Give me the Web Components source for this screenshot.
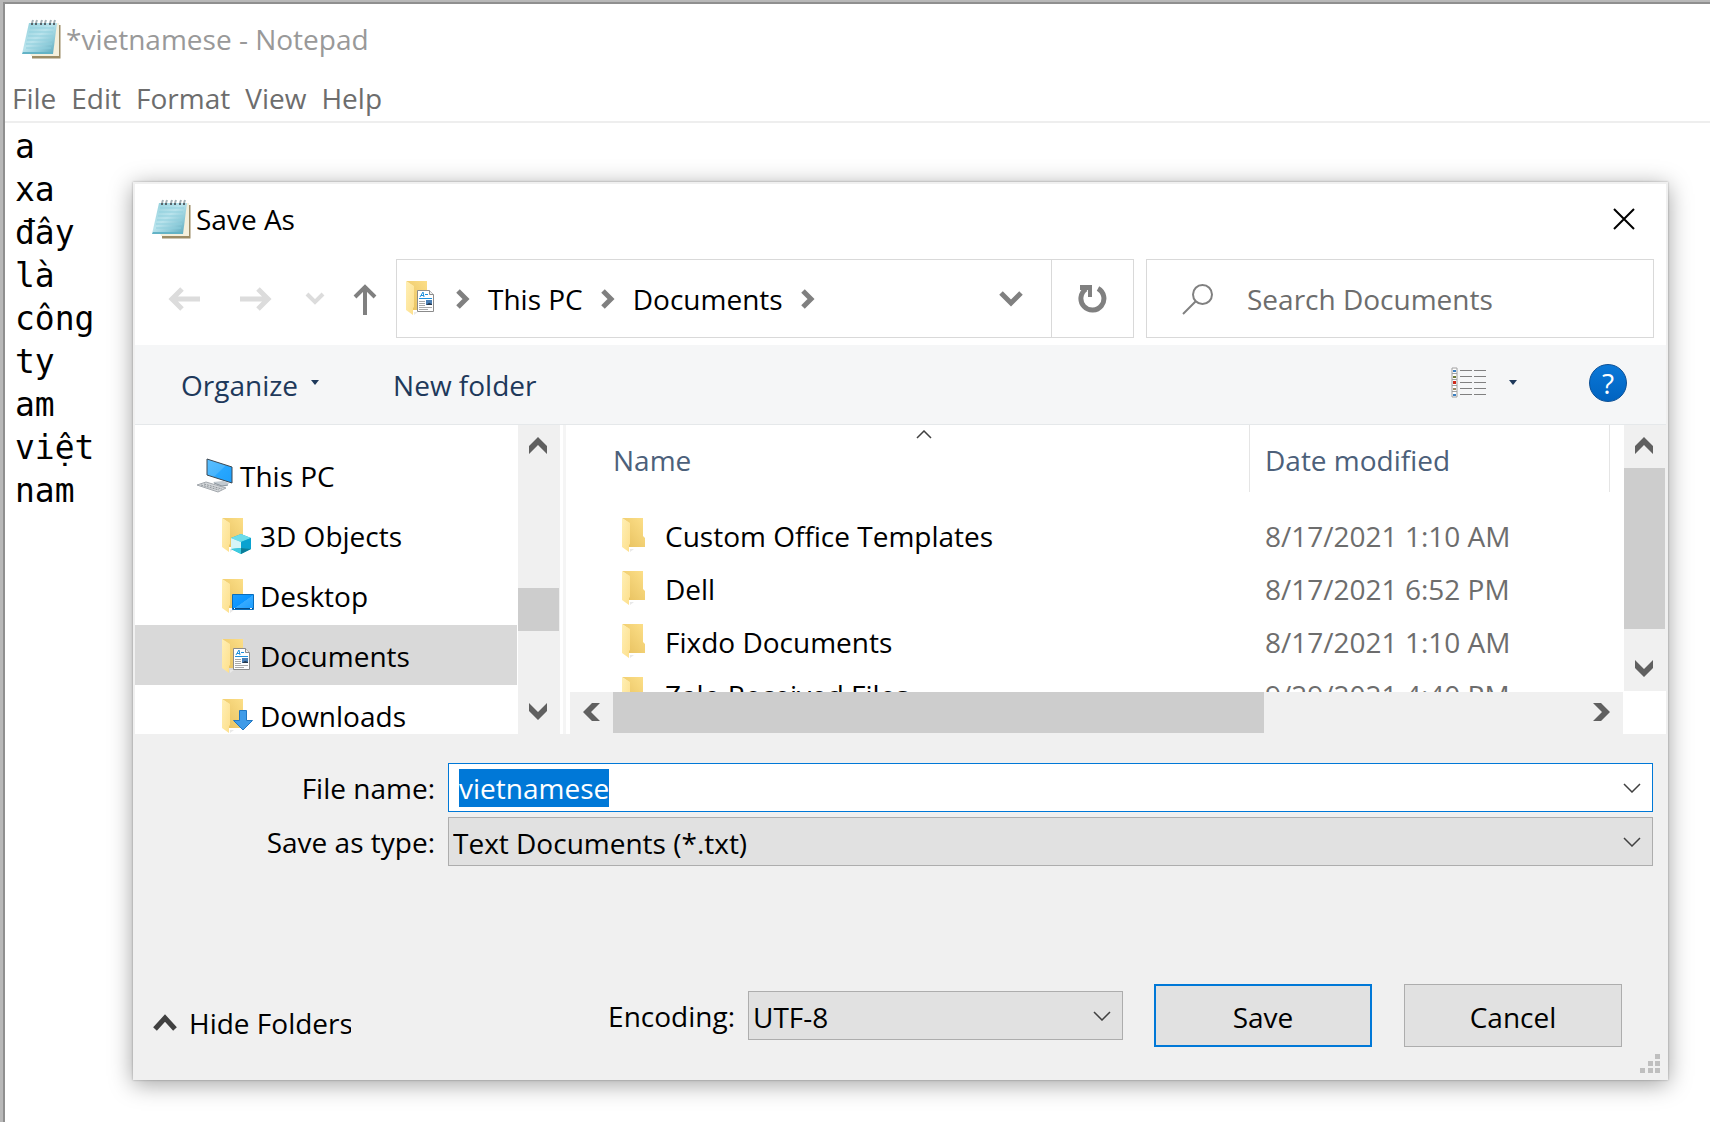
<!DOCTYPE html>
<html lang="en">
<head>
<meta charset="utf-8">
<title>*vietnamese - Notepad</title>
<style>
  html, body { margin: 0; height: 100%; overflow: hidden; }
  body {
    --ui: "Open Sans", "Noto Sans", sans-serif;
    --mono: "DejaVu Sans Mono", monospace;
    --accent: #0078d7;
    font: 28px/36px var(--ui);
    color: #000;
    background: #fff;
  }
</style>
</head>
<body>
<notepad-window>
  <save-dialog></save-dialog>
</notepad-window>

<script>
const FOLDER = `
  <defs>
    <linearGradient id="fb" x1="0" y1="1" x2="1" y2="0"><stop offset="0" stop-color="#e6bf5c"/><stop offset="1" stop-color="#fde08a"/></linearGradient>
    <linearGradient id="ff" x1="0" y1="0" x2="1" y2="1"><stop offset="0" stop-color="#ffefb4"/><stop offset="1" stop-color="#fddf8c"/></linearGradient>
  </defs>
  <path d="M8 34l4-3h-4z" fill="#e9e9e9"/>
  <path d="M0 0h21v18l2 2v9H7V5z" fill="url(#fb)"/>
  <path d="M0 0l8 5v21l-1 1v7l-7-5z" fill="url(#ff)"/>`;

const CHEV = (pts, w, stroke) => `<polyline points="${pts}" fill="none" stroke="${stroke}" stroke-width="${w}"/>`;

const ICONS = {
  notepad: [40, 41, `
    <defs>
      <linearGradient id="np" x1="0" y1="0" x2="1" y2="1"><stop offset="0" stop-color="#8fcfdb"/><stop offset=".45" stop-color="#b9e3ec"/><stop offset=".7" stop-color="#8fcbd9"/><stop offset="1" stop-color="#55a3b8"/></linearGradient>
    </defs>
    <path d="M11 38h27V6" fill="none" stroke="#9c8c66" stroke-width="3"/>
    <path d="M34 4h4v33H10l-1-3z" fill="#f4efdc"/>
    <path d="M8 4h28l-4 31H1z" fill="url(#np)"/>
    <path d="M2 33h29l1 2H1z" fill="#63b3c6"/>
    <path d="M9 9h24M8 13h24M7 17h25M6 21h25M5 25h26M5 29h25" stroke="#8fcfdd" stroke-width="1"/>
    <path d="M11 4l1-3M15 4l1-3M20 4l1-3M24 4l1-3M29 4l1-3M33 4l1-3" stroke="#a4b0b5" stroke-width="2"/>
    <path d="M10 5h2M14 5h2M19 5h2M23 5h2M28 5h2M32 5h2" stroke="#55636a" stroke-width="2"/>`],
  folder: [28, 35, FOLDER],
  'folder-docs': [32, 35, FOLDER + `
    <path d="M11.500 9.500h12l4 4v17h-16z" fill="#fff" stroke="#8b8b8b"/>
    <path d="M23.500 9.500v4h4" fill="#eee" stroke="#8b8b8b"/>
    <path d="M14 16l3-5 1 5M15 14.500h3M19 13.500h3M13 17.500h13" fill="none" stroke="#1e90dc"/>
    <path d="M13 20.500h6M13 22.500h6M13 24.500h6M13 26.500h13M13 28.500h9" stroke="#a9a9a9"/>
    <path d="M20 19h6v5h-6z" fill="#4a7fb5"/><path d="M20 24l3-2 3 1v1z" fill="#25384c"/>`],
  'folder-3d': [32, 37, FOLDER + `
    <path d="M19 16l10 4v11l-10 5-10-5V20z" fill="#19b5cf"/>
    <path d="M9 20l10-4 10 4-10 4z" fill="#6cdcea"/>
    <path d="M9 20l10 4v6l-10 1z" fill="#d6f5f8"/><path d="M9 31l10-1v6z" fill="#3ecbe0"/>
    <path d="M19 24l10-4v11l-10-1z" fill="#0aa2d0"/><path d="M19 30l10 1-10 5z" fill="#0b7d99"/>`],
  'folder-desktop': [34, 35, FOLDER + `
    <defs><linearGradient id="dk" x1="0" y1="0" x2="1" y2="1"><stop offset="0" stop-color="#1e9dff"/><stop offset=".5" stop-color="#0a95ff"/><stop offset=".52" stop-color="#35aaff"/><stop offset="1" stop-color="#1a9cff"/></linearGradient></defs>
    <path d="M10.500 15.500h21v15h-21z" fill="url(#dk)" stroke="#0a6dbb"/>
    <path d="M11 29.500h20" stroke="#084c86"/><path d="M12 29.500h1M28 29.500h2" stroke="#fff"/>`],
  'folder-down': [32, 35, FOLDER + `
    <path d="M17.500 11.500h7v10h6l-9.500 9.500-9.500-9.500h6z" fill="#3f9be8" stroke="#2177c2"/>`],
  pc: [38, 36, `
    <defs><linearGradient id="sc" x1="0" y1="0" x2="1" y2="1"><stop offset="0" stop-color="#5cc0ff"/><stop offset=".5" stop-color="#47b4fc"/><stop offset=".52" stop-color="#27a7ff"/><stop offset="1" stop-color="#1e9ffb"/></linearGradient></defs>
    <path d="M17 24l10-1 6 2-2 3-8 1z" fill="#c3cad0"/><path d="M18 25l8 3 6-1" fill="none" stroke="#8c969e"/>
    <path d="M11 1l25 8v16l-25-8z" fill="url(#sc)" stroke="#3d4750"/>
    <path d="M1 27l9-3 20 6-8 4z" fill="#d5d8db" stroke="#a3a8ad"/>
    <path d="M5 27l18 5M8 26l18 5" stroke="#8f959a" stroke-dasharray="2 1"/>`],
  close: [22, 22, `<path d="M1 1l20 20M21 1L1 21" stroke="#000" stroke-width="2"/>`],
  back: [32, 24, `<path d="M32 12H3M14 2L4 12l10 10" fill="none" stroke="#dcdcdc" stroke-width="5"/>`],
  forward: [32, 24, `<path d="M0 12h29M18 2l10 10-10 10" fill="none" stroke="#dcdcdc" stroke-width="5"/>`],
  recent: [20, 14, CHEV('2,2 10,10 18,2', 4, '#dcdcdc')],
  up: [24, 32, `<path d="M12 32V3M2 14L12 4l10 10" fill="none" stroke="#808080" stroke-width="4"/>`],
  crumb: [14, 20, CHEV('2,2 10,10 2,18', 5, '#808080')],
  drop: [24, 18, CHEV('2,3 12,13 22,3', 5, '#808080')],
  refresh: [30, 32, `
    <path d="M20 5.500A11.500 11.500 0 1 1 8 6" fill="none" stroke="#808080" stroke-width="5"/>
    <path d="M2 2h12v12h-4V7H2z" fill="#808080"/>`],
  search: [32, 32, `<circle cx="20.500" cy="11.500" r="9.500" fill="none" stroke="#808080" stroke-width="2"/><path d="M14 18L1 31" stroke="#808080" stroke-width="2"/>`],
  caret: [8, 5, `<path d="M0 0h8L4 5z" fill="#1e395b"/>`],
  view: [36, 32, `
    <path d="M1 1h5v29H1zM1 6.500h5M1 12.500h5M1 18.500h5M1 24.500h5" fill="#fff" stroke="#a0a0a0"/>
    <path d="M2 3h3v2H2zM2 27h3v2H2z" fill="#3c7fc0"/><path d="M2 9h3v2H2z" fill="#6f7a35"/><path d="M2 14h3v3H2z" fill="#cf2a1c"/><path d="M2 21h3v2H2z" fill="#9a8a66"/>
    <path d="M9 3.500h12M23 3.500h12M9 9.500h12M23 9.500h12M9 15.500h12M23 15.500h12M9 21.500h12M23 21.500h12M9 27.500h12M23 27.500h12" stroke="#808080"/>`],
  sort: [16, 9, CHEV('1,8 8,1 15,8', 1.5, '#404040')],
  'sb-up': [18, 17, `<path d="M0 17V9l9-9 9 9v8l-9-9z" fill="#606060"/>`],
  'sb-down': [18, 17, `<path d="M0 0v8l9 9 9-9V0L9 9z" fill="#606060"/>`],
  'sb-left': [17, 18, `<path d="M17 0H9L0 9l9 9h8L8 9z" fill="#606060"/>`],
  'sb-right': [17, 18, `<path d="M0 0h8l9 9-9 9H0l9-9z" fill="#606060"/>`],
  combo: [18, 10, CHEV('1,1 9,9 17,1', 1.5, '#404040')],
  hide: [26, 17, CHEV('3,15 13,4 23,15', 5, '#404040')],
  grip: [20, 20, `<path d="M15 0h5v5h-5zM8 7h5v5H8zM15 7h5v5h-5zM0 14h5v5H0zM8 14h5v5H8zM15 14h5v5h-5z" fill="#bfbfbf"/>`],
};

const BUTTON_RESET = `
  *{box-sizing:border-box}
  button{font:inherit;color:inherit;background:none;border:0;padding:0;margin:0;display:flex;align-items:center;text-align:left;white-space:nowrap}
`;

function define(name, html, ready) {
  const template = document.createElement('template');
  template.innerHTML = html;
  customElements.define(name, class extends HTMLElement {
    constructor() {
      super();
      this.attachShadow({ mode: 'open' }).append(template.content.cloneNode(true));
    }
    connectedCallback() {
      if (ready) ready(this, this.shadowRoot);
    }
  });
}

customElements.define('ui-icon', class extends HTMLElement {
  connectedCallback() {
    const [w, h, body] = ICONS[this.getAttribute('name')];
    this.attachShadow({ mode: 'open' }).innerHTML = `
      <style>:host{display:block;flex:none} svg{display:block}</style>
      <svg width="${w}" height="${h}" viewBox="0 0 ${w} ${h}" aria-hidden="true">${body}</svg>`;
  }
});

define('caption-bar', `
  <style>
    :host{display:flex;align-items:center;height:70px;white-space:nowrap}
    .text{margin-left:5px;flex:1}
  </style>
  <ui-icon name="notepad"></ui-icon>
  <span class="text"><slot></slot></span>
  <slot name="end"></slot>`);

define('menu-bar', `
  <style>
    ${BUTTON_RESET}
    :host{display:flex;align-items:center;gap:15px;height:47px;padding:1px 0 0 7px;box-sizing:border-box;color:#6d6d6d}
  </style>
  <button>File</button><button>Edit</button><button>Format</button><button>View</button><button>Help</button>`);

define('text-editor', `
  <style>
    :host{display:flex;flex:1;border-top:2px solid #eee}
    textarea{flex:1;border:0;outline:0;resize:none;margin:0;padding:2px 10px;overflow:hidden;background:none;font:33px/43px var(--mono);color:#000}
  </style>
  <textarea aria-label="Text editor" spellcheck="false">a
xa
đây
là
công
ty
am
việt
nam</textarea>`);

define('notepad-window', `
  <style>
    :host{display:flex;flex-direction:column;box-sizing:border-box;height:100vh;position:relative;background:#fff;
      border-style:solid;border-width:2px 0 0 3px;border-color:#b8b8b8;padding:2px 0 0 2px;box-shadow:inset 2px 2px 0 #8f8f8f}
    caption-bar{padding-left:16px;color:#999}
  </style>
  <caption-bar>*vietnamese - Notepad</caption-bar>
  <menu-bar></menu-bar>
  <text-editor></text-editor>
  <slot></slot>`);

define('address-row', `
  <style>
    ${BUTTON_RESET}
    :host{display:grid;grid-template-columns:261px minmax(0,738fr) 12px minmax(0,508fr);align-items:center;height:79px;margin:5px 12px 7px 0}
    .nav{display:grid;grid-template-columns:72px 65px 48px 24px;align-items:center;padding-left:33px}
    .bar{height:100%;border:1px solid #d9d9d9;display:flex;align-items:center}
    .crumbs{display:flex;align-items:center;gap:18px;padding-left:9px;flex:1}
    .drop{width:52px;height:100%}
    .refresh{width:82px;height:100%;justify-content:center;border-left:1px solid #d9d9d9}
    .search{grid-column:4;height:100%;border:1px solid #d9d9d9;display:flex;align-items:center;gap:33px;padding-left:35px}
    input{flex:1;min-width:0;border:0;outline:0;padding:0;font:inherit;background:none}
    input::placeholder{color:#6d6d6d;opacity:1}
  </style>
  <div class="nav">
    <button aria-label="Back"><ui-icon name="back"></ui-icon></button>
    <button aria-label="Forward"><ui-icon name="forward"></ui-icon></button>
    <button aria-label="Recent locations"><ui-icon name="recent"></ui-icon></button>
    <button aria-label="Up"><ui-icon name="up"></ui-icon></button>
  </div>
  <div class="bar">
    <div class="crumbs">
      <ui-icon name="folder-docs"></ui-icon>
      <ui-icon name="crumb"></ui-icon>
      <button>This PC</button>
      <ui-icon name="crumb"></ui-icon>
      <button>Documents</button>
      <ui-icon name="crumb"></ui-icon>
    </div>
    <button class="drop" aria-label="Previous locations"><ui-icon name="drop"></ui-icon></button>
    <button class="refresh" aria-label="Refresh"><ui-icon name="refresh"></ui-icon></button>
  </div>
  <div class="search">
    <ui-icon name="search"></ui-icon>
    <input type="search" aria-label="Search Documents" placeholder="Search Documents">
  </div>`);

define('command-bar', `
  <style>
    ${BUTTON_RESET}
    :host{display:flex;align-items:center;box-sizing:border-box;height:80px;padding:0 39px 0 46px;background:#f5f6f7;border-bottom:1px solid #e5e8ea;color:#1e395b}
    .organize{gap:13px;margin-right:74px}
    .organize ui-icon{margin-bottom:4px}
    .view,.help{margin-bottom:4px}
    .view{margin-left:auto;gap:22px;margin-right:72px}
    .help{width:38px;height:38px;border-radius:50%;border:1px solid #0a4f96;background:linear-gradient(#0a78d8,#0063c0);color:#fff;justify-content:center}
  </style>
  <button class="organize">Organize<ui-icon name="caret"></ui-icon></button>
  <button>New folder</button>
  <button class="view" aria-label="Change your view"><ui-icon name="view"></ui-icon><ui-icon name="caret"></ui-icon></button>
  <button class="help" aria-label="Help">?</button>`);

customElements.define('pane-scroll', class extends HTMLElement {
  connectedCallback() {
    const flat = this.hasAttribute('horizontal');
    const [before, thumb, after] = this.getAttribute('parts').split(' ');
    this.attachShadow({ mode: 'open' }).innerHTML = `
      <style>
        ${BUTTON_RESET}
        :host{display:flex;flex-direction:column;flex:none;width:42px;background:#f0f0f0}
        :host([horizontal]){flex-direction:row;width:auto;height:42px}
        button{flex:none;justify-content:center;width:40px;height:43px;padding-bottom:2px}
        :host([horizontal]) button{width:43px;height:41px}
        .track{flex:1;display:flex;flex-direction:inherit;padding-right:1px}
        :host([horizontal]) .track{padding:0 0 1px}
        .thumb{background:#cdcdcd}
      </style>
      <button aria-label="Scroll back"><ui-icon name="${flat ? 'sb-left' : 'sb-up'}"></ui-icon></button>
      <div class="track">
        <div style="flex:${before} 0 0"></div><div class="thumb" style="flex:${thumb} 0 0"></div><div style="flex:${after} 0 0"></div>
      </div>
      <button aria-label="Scroll forward"><ui-icon name="${flat ? 'sb-right' : 'sb-down'}"></ui-icon></button>`;
  }
});

customElements.define('tree-item', class extends HTMLElement {
  connectedCallback() {
    this.attachShadow({ mode: 'open' }).innerHTML = `
      <style>
        ${BUTTON_RESET}
        :host{display:block;margin-right:1px}
        button{width:100%;height:60px;padding:2px 0 0 87px}
        :host([root]) button{padding-left:61px}
        :host([selected]){background:#d9d9d9}
        .icon{width:38px;flex:none}
        :host([root]) .icon{width:44px}
      </style>
      <button><span class="icon"><ui-icon name="${this.getAttribute('icon')}"></ui-icon></span><slot></slot></button>`;
  }
});

define('folder-tree', `
  <style>
    :host{display:flex;width:425px;flex:none;overflow:hidden}
    .items{flex:1;padding-top:20px;min-width:0}
  </style>
  <div class="items">
    <tree-item root icon="pc">This PC</tree-item>
    <tree-item icon="folder-3d">3D Objects</tree-item>
    <tree-item icon="folder-desktop">Desktop</tree-item>
    <tree-item icon="folder-docs" selected>Documents</tree-item>
    <tree-item icon="folder-down">Downloads</tree-item>
  </div>
  <pane-scroll parts="120 43 60"></pane-scroll>`);

define('file-list', `
  <style>
    *{box-sizing:border-box}
    :host{display:flex;flex:1;min-width:0;margin-left:3px;border-left:3px solid #f5f5f5;padding-left:4px}
    .main{flex:1;min-width:0;display:flex;flex-direction:column}
    .view{height:267px;overflow:hidden}
    .side{display:flex;flex-direction:column;width:43px;padding-left:1px;flex:none}
    .side pane-scroll{height:266px}
    table{border-collapse:collapse;table-layout:fixed;width:1040px}
    th,td{padding:0;font-weight:400;text-align:left;white-space:nowrap}
    th{height:84px;vertical-align:top;color:#4c607a}
    .head{height:67px;border-right:1px solid #e5e5e5;padding:17px 0 0 15px;position:relative}
    th:first-child .head{padding-left:43px}
    .head ui-icon{position:absolute;left:346px;top:5px}
    td{height:53px;color:#6d6d6d;padding-left:15px}
    td:first-child{color:#000;padding-left:52px}
    .cell{display:flex;align-items:center;gap:15px}
  </style>
  <div class="main">
    <div class="view">
      <table>
        <colgroup><col style="width:680px"><col style="width:360px"></colgroup>
        <thead><tr>
          <th><div class="head">Name<ui-icon name="sort"></ui-icon></div></th>
          <th><div class="head">Date modified</div></th>
        </tr></thead>
        <tbody>
          <tr><td><div class="cell"><ui-icon name="folder"></ui-icon>Custom Office Templates</div></td><td>8/17/2021 1:10 AM</td></tr>
          <tr><td><div class="cell"><ui-icon name="folder"></ui-icon>Dell</div></td><td>8/17/2021 6:52 PM</td></tr>
          <tr><td><div class="cell"><ui-icon name="folder"></ui-icon>Fixdo Documents</div></td><td>8/17/2021 1:10 AM</td></tr>
          <tr><td><div class="cell"><ui-icon name="folder"></ui-icon>Zalo Received Files</div></td><td>9/29/2021 4:40 PM</td></tr>
        </tbody>
      </table>
    </div>
    <pane-scroll horizontal parts="0 651 316"></pane-scroll>
  </div>
  <div class="side"><pane-scroll parts="0 161 19"></pane-scroll></div>`);

define('save-form', `
  <style>
    ${BUTTON_RESET}
    :host{display:block;background:#f0f0f0;padding:29px 0 31px}
    .fields{display:grid;grid-template-columns:300px 1fr;column-gap:13px;row-gap:5px;margin-right:13px}
    label{text-align:right;white-space:nowrap;line-height:47px;padding-top:2px}
    .combo{display:grid;align-items:center;height:49px;min-width:0}
    .combo > *{grid-area:1/1}
    .combo ui-icon{justify-self:end;margin-right:12px;pointer-events:none}
    select,input{appearance:none;width:100%;height:49px;margin:0;border:1px solid #adadad;border-radius:0;outline:0;background:#e1e1e1;font:inherit;color:#000;padding:2px 4px 0}
    input{background:#fff;border-color:var(--accent);padding:0 10px;line-height:41px}
    input::selection{background:var(--accent);color:#fff}
    .footer{display:flex;align-items:center;margin:118px 44px 0 17px;height:63px}
    .hide{gap:11px;padding-top:14px;margin-right:auto}
    .hide span{width:162px;overflow:hidden}
    .encoding{width:375px;margin:0 31px 0 13px}
    .push{width:218px;height:63px;justify-content:center;background:#e1e1e1;border:1px solid #adadad;padding-top:3px}
    .default{border:2px solid var(--accent);margin-right:32px}
  </style>
  <div class="fields">
    <label for="name">File name:</label>
    <div class="combo"><input id="name" type="text" value="vietnamese" spellcheck="false"><ui-icon name="combo"></ui-icon></div>
    <label for="type">Save as type:</label>
    <div class="combo"><select id="type"><option>Text Documents (*.txt)</option></select><ui-icon name="combo"></ui-icon></div>
  </div>
  <div class="footer">
    <button class="hide"><ui-icon name="hide"></ui-icon><span>Hide Folders</span></button>
    <label for="encoding">Encoding:</label>
    <div class="combo encoding"><select id="encoding"><option>UTF-8</option></select><ui-icon name="combo"></ui-icon></div>
    <button class="push default">Save</button>
    <button class="push">Cancel</button>
  </div>`, (host, root) => {
    const name = root.getElementById('name');
    name.focus();
    name.select();
  });

define('save-dialog', `
  <style>
    ${BUTTON_RESET}
    :host{position:absolute;left:130px;right:42px;top:180px;background:#fff;border:2px solid #f0f0f0;box-shadow:0 0 2px #00000050,0 4px 22px #00000060}
    caption-bar{padding:0 31px 0 16px}
    .panes{display:flex;height:309px}
    .grip{position:absolute;right:6px;bottom:4px}
  </style>
  <caption-bar>Save As<button slot="end" aria-label="Close"><ui-icon name="close"></ui-icon></button></caption-bar>
  <address-row></address-row>
  <command-bar></command-bar>
  <div class="panes"><folder-tree></folder-tree><file-list></file-list></div>
  <save-form></save-form>
  <ui-icon class="grip" name="grip"></ui-icon>`);
</script>
</body>
</html>
